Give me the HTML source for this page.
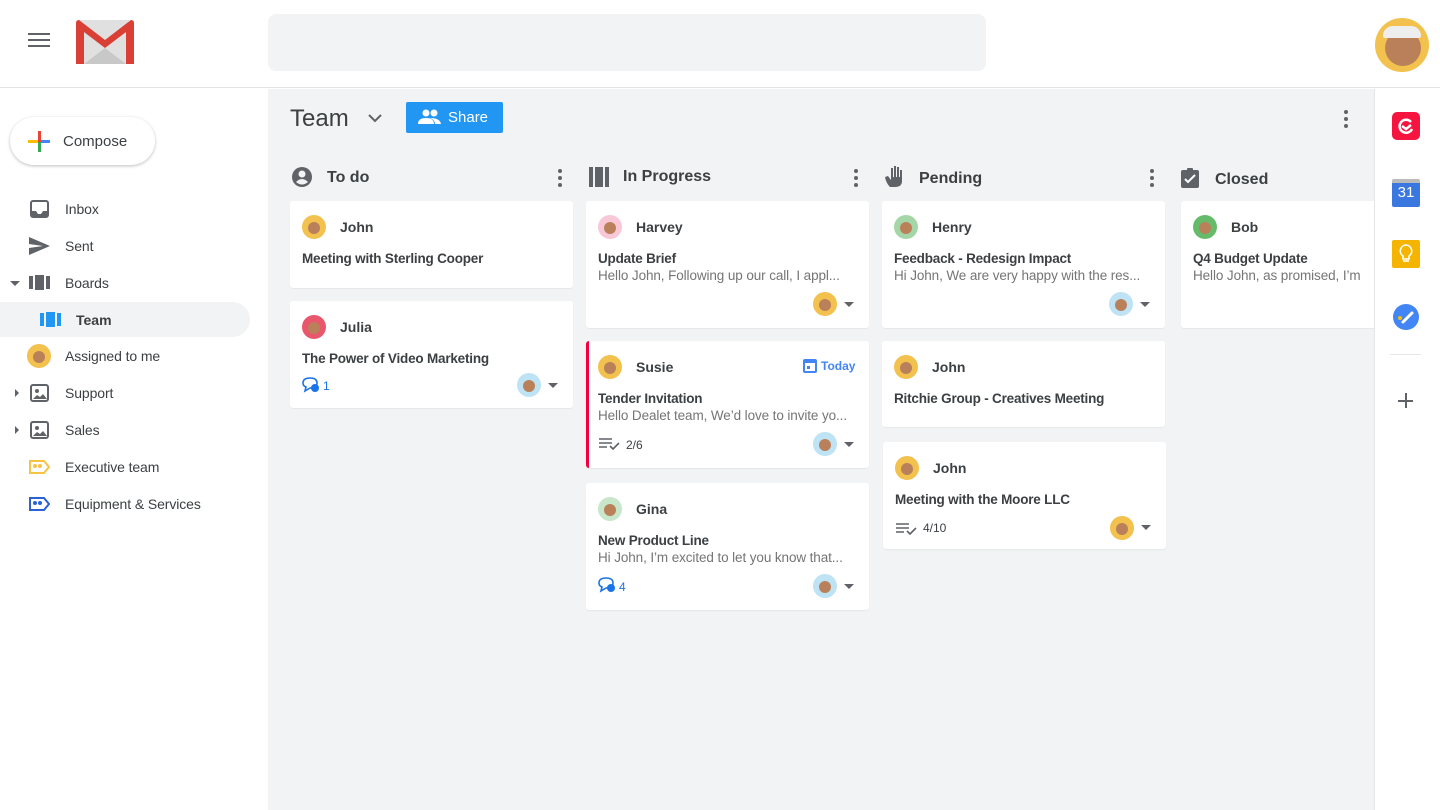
<!DOCTYPE html>
<html><head><meta charset="utf-8"><style>
*{box-sizing:border-box;margin:0;padding:0}
body{width:1440px;height:810px;overflow:hidden;font-family:"Liberation Sans",Roboto,sans-serif;background:#fff;position:relative;color:#3c4043}
.a{position:absolute}
.hdr{left:0;top:0;width:1440px;height:88px;background:#fff;border-bottom:1px solid #e3e3e3}
.main{left:268px;top:89px;width:1106px;height:721px;background:#f1f3f4}
.rail{left:1374px;top:89px;width:66px;height:721px;background:#fff;border-left:1px solid #e6e6e6}
.nav{left:65px;font-size:14px;color:#3c4043;letter-spacing:-0.1px}
.card{position:absolute;background:#fff;border-radius:3px;box-shadow:0 1px 1px rgba(0,0,0,.05)}
.nm{position:absolute;left:50px;top:18px;font-size:14px;font-weight:bold;color:#3c4043}
.tt{position:absolute;left:12px;top:50px;font-size:13.5px;font-weight:bold;color:#3c4043;white-space:nowrap;letter-spacing:-0.2px}
.sn{position:absolute;left:12px;top:67px;font-size:13.5px;color:#757575;white-space:nowrap;overflow:hidden;width:258px;letter-spacing:-0.1px}
.av{position:absolute;width:24px;height:24px;border-radius:50%}
.av::after{content:"";position:absolute;left:6px;top:7px;width:12px;height:12px;border-radius:50%;background:#b9805a}
.cav{left:12px;top:14px}
.dd{position:absolute;width:0;height:0;border-left:5px solid transparent;border-right:5px solid transparent;border-top:5px solid #5f6368}
.ch{position:absolute;top:168px;font-size:16px;font-weight:bold;color:#3c4043}
.dots{position:absolute;width:4px}
.dots i{display:block;width:4px;height:4px;border-radius:50%;background:#5f6368;margin-bottom:3px}
</style></head><body>
<div class="a hdr"></div>
<div class="a" style="left:28px;top:33px;width:22px;height:2px;background:#5f6368"></div>
<div class="a" style="left:28px;top:39px;width:22px;height:2px;background:#5f6368"></div>
<div class="a" style="left:28px;top:45px;width:22px;height:2px;background:#5f6368"></div>
<svg class="a" style="left:76px;top:20px" width="58" height="44" viewBox="0 0 58 44"><rect x="0" y="0" width="58" height="44" rx="3" fill="#e0e0e0"/><path d="M8 44L29 28L50 44Z" fill="#c8c8c8"/><path d="M0 3Q0 0 3 0L29 20L55 0Q58 0 58 3V44H50V12L29 28L8 12V44H0Z" fill="#d93f35"/></svg>
<div class="a" style="left:268px;top:14px;width:718px;height:57px;background:#f1f3f4;border-radius:8px"></div>
<div class="a" style="left:1375px;top:18px;width:54px;height:54px;border-radius:50%;background:#f2c14e"></div>
<div class="a" style="left:1385px;top:30px;width:36px;height:36px;border-radius:50%;background:#b9805a"></div>
<div class="a" style="left:1383px;top:26px;width:38px;height:12px;border-radius:18px 18px 4px 4px;background:#eee"></div>

<div class="a" style="left:10px;top:117px;width:145px;height:48px;border-radius:24px;background:#fff;box-shadow:0 1px 3px rgba(0,0,0,.25)"></div>
<div class="a" style="left:28px;top:140px;width:22px;height:3px;background:#4285f4"></div>
<div class="a" style="left:28px;top:140px;width:11px;height:3px;background:#fbbc04"></div>
<div class="a" style="left:38px;top:131px;width:3px;height:11px;background:#ea4335"></div>
<div class="a" style="left:38px;top:142px;width:3px;height:10px;background:#34a853"></div>
<div class="a" style="left:63px;top:133px;font-size:15px;color:#3c4043">Compose</div>

<svg class="a" style="left:30px;top:200px" width="19" height="18" viewBox="0 0 19 18"><rect x="1" y="1" width="17" height="16" rx="2" fill="none" stroke="#5f6368" stroke-width="2"/><path d="M1 11h5l2 3h3l2-3h5v6H1z" fill="#5f6368"/></svg>
<div class="a nav" style="top:201px">Inbox</div>
<svg class="a" style="left:29px;top:237px" width="21" height="18" viewBox="0 0 21 18"><path d="M0 0L21 9L0 18V11L14 9L0 7Z" fill="#5f6368"/></svg>
<div class="a nav" style="top:238px">Sent</div>
<div class="dd" style="left:10px;top:281px"></div>
<svg class="a" style="left:29px;top:275px" width="21" height="15"><rect x="0" y="1" width="4" height="13" fill="#5f6368"/><rect x="6" y="0" width="9" height="15" fill="#5f6368"/><rect x="17" y="1" width="4" height="13" fill="#5f6368"/></svg>
<div class="a nav" style="top:275px">Boards</div>
<div class="a" style="left:0;top:302px;width:250px;height:35px;background:#f1f3f4;border-radius:0 18px 18px 0"></div>
<svg class="a" style="left:40px;top:312px" width="21" height="15"><rect x="0" y="1" width="4" height="13" fill="#2196f3"/><rect x="6" y="0" width="9" height="15" fill="#2196f3"/><rect x="17" y="1" width="4" height="13" fill="#2196f3"/></svg>
<div class="a" style="left:76px;top:312px;font-size:14px;font-weight:bold;color:#3c4043">Team</div>
<div class="av" style="left:27px;top:344px;background:#f2c14e"></div>
<div class="a nav" style="top:348px">Assigned to me</div>
<div class="a" style="left:15px;top:389px;border-top:4px solid transparent;border-bottom:4px solid transparent;border-left:4px solid #5f6368"></div>
<svg class="a" style="left:30px;top:384px" width="19" height="18"><rect x="1" y="1" width="17" height="16" rx="2" fill="none" stroke="#5f6368" stroke-width="2"/><circle cx="7" cy="7" r="2" fill="#5f6368"/><path d="M3 15l4-4 3 2 3-3 4 5z" fill="#5f6368"/></svg>
<div class="a nav" style="top:385px">Support</div>
<div class="a" style="left:15px;top:426px;border-top:4px solid transparent;border-bottom:4px solid transparent;border-left:4px solid #5f6368"></div>
<svg class="a" style="left:30px;top:421px" width="19" height="18"><rect x="1" y="1" width="17" height="16" rx="2" fill="none" stroke="#5f6368" stroke-width="2"/><circle cx="7" cy="7" r="2" fill="#5f6368"/><path d="M3 15l4-4 3 2 3-3 4 5z" fill="#5f6368"/></svg>
<div class="a nav" style="top:422px">Sales</div>
<svg class="a" style="left:29px;top:460px" width="21" height="14"><path d="M1 1h14l5 6-5 6H1z" fill="none" stroke="#f6c344" stroke-width="2"/><circle cx="6" cy="6" r="2" fill="#f6c344"/><circle cx="11" cy="6" r="2" fill="#f6c344"/></svg>
<div class="a nav" style="top:459px">Executive team</div>
<svg class="a" style="left:29px;top:497px" width="21" height="14"><path d="M1 1h14l5 6-5 6H1z" fill="none" stroke="#2a62d4" stroke-width="2"/><circle cx="6" cy="6" r="2" fill="#2a62d4"/><circle cx="11" cy="6" r="2" fill="#2a62d4"/></svg>
<div class="a nav" style="top:496px">Equipment &amp; Services</div>

<div class="a main"></div>
<div class="a rail"></div>

<div class="a" style="left:290px;top:105px;font-size:24px;color:#3c4043">Team</div>
<svg class="a" style="left:368px;top:114px" width="14" height="9"><path d="M1 1l6 6 6-6" fill="none" stroke="#5f6368" stroke-width="2"/></svg>
<div class="a" style="left:406px;top:102px;width:97px;height:31px;background:#2196f3;border-radius:2px"></div>
<svg class="a" style="left:418px;top:109px" width="24" height="16"><circle cx="8" cy="4" r="3.5" fill="#fff"/><circle cx="16" cy="4" r="3.5" fill="#fff"/><path d="M0 15q0-6 8-6t8 6zM12 9q10 0 11 6h-6q0-4-5-6z" fill="#fff"/></svg>
<div class="a" style="left:448px;top:109px;font-size:15px;color:#fff">Share</div>
<div class="dots a" style="left:1344px;top:110px"><i></i><i></i><i></i></div>

<svg class="a" style="left:291px;top:166px" width="22" height="22"><circle cx="11" cy="11" r="10" fill="#5f6368"/><circle cx="11" cy="8" r="3.5" fill="#f1f3f4"/><path d="M5 16q6-6 12 0q-6 5-12 0z" fill="#f1f3f4"/></svg>
<div class="ch" style="left:327px;top:169px">To do</div>
<div class="dots a" style="left:558px;top:169px"><i></i><i></i><i></i></div>
<svg class="a" style="left:589px;top:167px" width="20" height="20"><rect x="0" y="0" width="4" height="20" fill="#5f6368"/><rect x="6" y="0" width="8" height="20" fill="#5f6368"/><rect x="16" y="0" width="4" height="20" fill="#5f6368"/></svg>
<div class="ch" style="left:623px;top:168px">In Progress</div>
<div class="dots a" style="left:854px;top:169px"><i></i><i></i><i></i></div>
<svg class="a" style="left:884px;top:165px" width="22" height="24"><path d="M6 22Q2 18 1 12l3-1 3 4V3h2v9h1V1h2v11h1V2h2v10h1V5h2v11q0 6-7 6z" fill="#5f6368"/></svg>
<div class="ch" style="left:919px;top:170px">Pending</div>
<div class="dots a" style="left:1150px;top:169px"><i></i><i></i><i></i></div>
<svg class="a" style="left:1181px;top:168px" width="18" height="20"><rect x="0" y="2" width="18" height="18" rx="2" fill="#5f6368"/><rect x="6" y="0" width="6" height="4" rx="1" fill="#5f6368"/><path d="M4 11l3 3 7-7" fill="none" stroke="#fff" stroke-width="2"/></svg>
<div class="ch" style="left:1215px;top:171px">Closed</div>

<div class="card" style="left:290px;top:201px;width:283px;height:87px">
<div class="av cav" style="background:#f2c14e"></div><div class="nm">John</div><div class="tt">Meeting with Sterling Cooper</div></div>
<div class="card" style="left:290px;top:301px;width:283px;height:107px">
<div class="av cav" style="background:#e8576b"></div><div class="nm">Julia</div><div class="tt">The Power of Video Marketing</div>
<svg class="a" style="left:12px;top:76px" width="18" height="16"><path d="M8 1q7 0 7 5t-7 5l-5 3 1-4Q1 9 1 6q0-5 7-5z" fill="none" stroke="#1a73e8" stroke-width="1.6"/><circle cx="13" cy="11" r="4" fill="#1a73e8"/></svg>
<div class="a" style="left:33px;top:78px;font-size:12px;color:#1a73e8">1</div>
<div class="av" style="left:227px;top:72px;background:#bde3f5"></div><div class="dd" style="left:258px;top:82px"></div></div>

<div class="card" style="left:586px;top:201px;width:283px;height:127px">
<div class="av cav" style="background:#f8c8d8"></div><div class="nm">Harvey</div><div class="tt">Update Brief</div><div class="sn">Hello John, Following up our call, I appl...</div>
<div class="av" style="left:227px;top:91px;background:#f2c14e"></div><div class="dd" style="left:258px;top:101px"></div></div>
<div class="card" style="left:586px;top:341px;width:283px;height:127px;border-left:3px solid #f5003c">
<div class="av" style="left:9px;top:14px;background:#f2c14e"></div><div class="nm" style="left:47px">Susie</div>
<svg class="a" style="left:214px;top:17px" width="14" height="15"><rect x="1" y="2" width="12" height="12" rx="1" fill="none" stroke="#4285f4" stroke-width="2"/><rect x="1" y="2" width="12" height="3" fill="#4285f4"/><rect x="4" y="8" width="3" height="3" fill="#4285f4"/></svg>
<div class="a" style="left:232px;top:18px;font-size:12px;font-weight:bold;color:#4285f4">Today</div>
<div class="tt" style="left:9px">Tender Invitation</div><div class="sn" style="left:9px">Hello Dealet team, We’d love to invite yo...</div>
<svg class="a" style="left:10px;top:96px" width="22" height="14"><path d="M0 2h13M0 6h13M0 10h8" stroke="#5f6368" stroke-width="1.6"/><path d="M11 9l3 3 6-6" fill="none" stroke="#5f6368" stroke-width="1.6"/></svg>
<div class="a" style="left:37px;top:97px;font-size:12px;color:#3c4043">2/6</div>
<div class="av" style="left:224px;top:91px;background:#bde3f5"></div><div class="dd" style="left:255px;top:101px"></div></div>
<div class="card" style="left:586px;top:483px;width:283px;height:127px">
<div class="av cav" style="background:#c8e6c9"></div><div class="nm">Gina</div><div class="tt">New Product Line</div><div class="sn">Hi John, I’m excited to let you know that...</div>
<svg class="a" style="left:12px;top:94px" width="18" height="16"><path d="M8 1q7 0 7 5t-7 5l-5 3 1-4Q1 9 1 6q0-5 7-5z" fill="none" stroke="#1a73e8" stroke-width="1.6"/><circle cx="13" cy="11" r="4" fill="#1a73e8"/></svg>
<div class="a" style="left:33px;top:97px;font-size:12px;color:#1a73e8">4</div>
<div class="av" style="left:227px;top:91px;background:#bde3f5"></div><div class="dd" style="left:258px;top:101px"></div></div>

<div class="card" style="left:882px;top:201px;width:283px;height:127px">
<div class="av cav" style="background:#a5d6a7"></div><div class="nm">Henry</div><div class="tt">Feedback - Redesign Impact</div><div class="sn">Hi John, We are very happy with the res...</div>
<div class="av" style="left:227px;top:91px;background:#bde3f5"></div><div class="dd" style="left:258px;top:101px"></div></div>
<div class="card" style="left:882px;top:341px;width:283px;height:86px">
<div class="av cav" style="background:#f2c14e"></div><div class="nm">John</div><div class="tt">Ritchie Group - Creatives Meeting</div></div>
<div class="card" style="left:883px;top:442px;width:283px;height:107px">
<div class="av cav" style="background:#f2c14e"></div><div class="nm">John</div><div class="tt">Meeting with the Moore LLC</div>
<svg class="a" style="left:13px;top:80px" width="22" height="14"><path d="M0 2h13M0 6h13M0 10h8" stroke="#5f6368" stroke-width="1.6"/><path d="M11 9l3 3 6-6" fill="none" stroke="#5f6368" stroke-width="1.6"/></svg>
<div class="a" style="left:40px;top:79px;font-size:12px;color:#3c4043">4/10</div>
<div class="av" style="left:227px;top:74px;background:#f2c14e"></div><div class="dd" style="left:258px;top:83px"></div></div>

<div class="card" style="left:1181px;top:201px;width:193px;height:127px;border-radius:3px 0 0 3px">
<div class="av cav" style="background:#66bb6a"></div><div class="nm">Bob</div><div class="tt">Q4 Budget Update</div><div class="sn" style="width:181px">Hello John, as promised, I’m</div></div>

<div class="a" style="left:1392px;top:112px;width:28px;height:28px;border-radius:5px;background:#f5153f"></div>
<svg class="a" style="left:1397px;top:117px" width="18" height="18"><path d="M14 5A6.5 6.5 0 1 0 15 12" fill="none" stroke="#fff" stroke-width="2.5"/><path d="M5 9l4 3 5-4" fill="none" stroke="#fff" stroke-width="2.5"/></svg>
<div class="a" style="left:1392px;top:179px;width:28px;height:28px;border-radius:2px;background:#3a78e0;border-top:4px solid #bbb"></div>
<div class="a" style="left:1392px;top:184px;width:28px;font-size:15px;color:#fff;text-align:center">31</div>
<div class="a" style="left:1392px;top:240px;width:28px;height:28px;border-radius:2px;background:#f4b400"></div>
<svg class="a" style="left:1398px;top:244px" width="16" height="20"><path d="M8 1a6 6 0 0 0-3 11v3h6v-3A6 6 0 0 0 8 1z" fill="none" stroke="#fff" stroke-width="1.6"/><path d="M5 17h6" stroke="#fff" stroke-width="1.6"/></svg>
<div class="a" style="left:1393px;top:304px;width:26px;height:26px;border-radius:50%;background:#4285f4"></div>
<svg class="a" style="left:1393px;top:304px" width="26" height="26"><path d="M10 18l9-9" stroke="#fff" stroke-width="3" stroke-linecap="round"/><circle cx="7" cy="14" r="2" fill="#fbbc04"/></svg>
<div class="a" style="left:1390px;top:354px;width:31px;height:1px;background:#e6e6e6"></div>
<div class="a" style="left:1398px;top:400px;width:15px;height:1.5px;background:#5f6368"></div>
<div class="a" style="left:1405px;top:393px;width:1.5px;height:15px;background:#5f6368"></div>
</body></html>
